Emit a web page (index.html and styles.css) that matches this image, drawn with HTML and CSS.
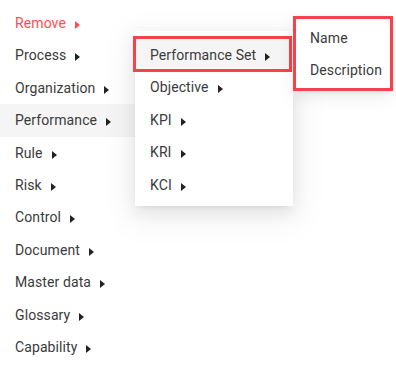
FILE: index.html
```html
<!DOCTYPE html>
<html>
<head>
<meta charset="utf-8">
<link rel="stylesheet" href="styles.css">
</head>
<body>
<div class="stage">
  <ul class="menu main">
    <li class="item danger">Remove<span class="caret"></span></li>
    <li class="item">Process<span class="caret"></span></li>
    <li class="item">Organization<span class="caret"></span></li>
    <li class="item active">Performance<span class="caret"></span></li>
    <li class="item">Rule<span class="caret"></span></li>
    <li class="item">Risk<span class="caret"></span></li>
    <li class="item">Control<span class="caret"></span></li>
    <li class="item">Document<span class="caret"></span></li>
    <li class="item">Master data<span class="caret"></span></li>
    <li class="item">Glossary<span class="caret"></span></li>
    <li class="item">Capability<span class="caret"></span></li>
  </ul>
  <ul class="menu sub">
    <li class="item active marked">Performance Set<span class="caret"></span></li>
    <li class="item">Objective<span class="caret"></span></li>
    <li class="item">KPI<span class="caret"></span></li>
    <li class="item">KRI<span class="caret"></span></li>
    <li class="item">KCI<span class="caret"></span></li>
  </ul>
  <ul class="menu sub2">
    <li class="item">Name</li>
    <li class="item">Description</li>
  </ul>
</div>
</body>
</html>
```
FILE: styles.css
```css
html, body {
  margin: 0;
  padding: 0;
  background: #ffffff;
}
.stage {
  position: relative;
  width: 396px;
  height: 368px;
  overflow: hidden;
  font-family: Roboto, "Liberation Sans", sans-serif;
  font-size: 14px;
  letter-spacing: 0.1px;
  color: #3b3b3b;
}
.menu {
  list-style: none;
  margin: 0;
  background: #ffffff;
}
.item {
  position: relative;
  padding: 8px 15px;
  line-height: 16.4px;
  white-space: nowrap;
}
.main {
  width: 135px;
  padding: 7px 0 0;
}
.item.active {
  background: #f5f5f5;
}
.danger {
  color: #ff4d4f;
}
.caret {
  display: inline-block;
  width: 0;
  height: 0;
  margin-left: 9px;
  vertical-align: -1px;
  border-top: 4.5px solid transparent;
  border-bottom: 4.5px solid transparent;
  border-left: 5px solid #222222;
}
.danger .caret {
  border-left-color: #ff4d4f;
}
.sub {
  position: absolute;
  left: 135px;
  top: 31px;
  width: 158px;
  padding: 8px 0 5px;
  box-shadow: 0 3px 6px -4px rgba(0,0,0,0.12), 0 6px 16px 0 rgba(0,0,0,0.08), 0 9px 28px 8px rgba(0,0,0,0.05);
}
.marked::after {
  content: "";
  position: absolute;
  left: -2px;
  right: 1px;
  top: -3px;
  bottom: -1px;
  border: 3px solid #f4434c;
}
.sub2 {
  position: absolute;
  left: 293px;
  top: 16px;
  width: 94px;
  padding: 3px 0 1px;
  border: 3px solid #f4434c;
  box-shadow: 0 3px 6px -4px rgba(0,0,0,0.12), 0 6px 16px 0 rgba(0,0,0,0.08);
}
.sub2 .item {
  padding-left: 14px;
  padding-right: 10px;
}
```
